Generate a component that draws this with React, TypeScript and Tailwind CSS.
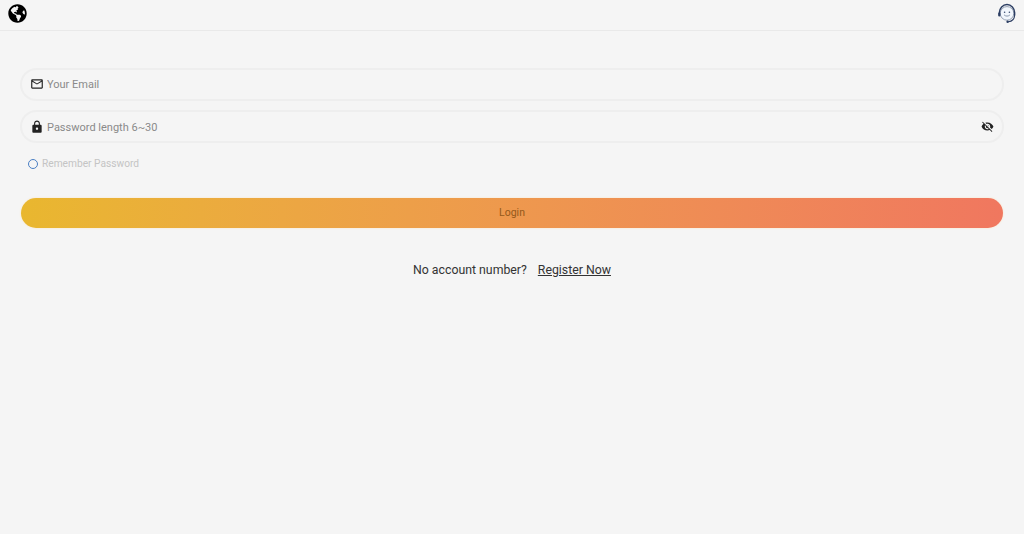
import { MdLock, MdMailOutline, MdVisibilityOff } from 'react-icons/md';
import { FaGlobeAmericas } from 'react-icons/fa';

// Support face with a headset, blue outline
const SupportIcon = () => (
  <svg width="20" height="21" viewBox="0 0 20 21" fill="none">
    <circle cx="10" cy="10.4" r="6.8" fill="#f2f7fd" stroke="#7d8ba3" strokeWidth=".8" />
    <path d="M2.4 12V9.6C2.4 5.2 5.8 1.6 10 1.6s7.6 3.6 7.6 8V12" stroke="#2c3e63" strokeWidth="1.5" strokeLinecap="round" />
    <path d="M17.6 12.4c-.2 3.6-2.6 6-6.2 6.3" stroke="#2c3e63" strokeWidth="1.1" strokeLinecap="round" />
    <circle cx="10.6" cy="18.8" r="1.2" fill="#2c3e63" />
    <rect x="1.2" y="9.4" width="2.2" height="4.2" rx="1" fill="#2c3e63" />
    <circle cx="7.6" cy="9.2" r=".8" fill="#3a4c70" />
    <circle cx="12.4" cy="9.2" r=".8" fill="#3a4c70" />
    <path d="M7.4 12.2c1.4 1.3 3.8 1.3 5.2 0" stroke="#7d8ba3" strokeWidth=".9" strokeLinecap="round" />
  </svg>
);

const App = () => {
  return (
    <div className="min-h-[534px] bg-[#f5f5f5] font-['Roboto',sans-serif]">
      <header className="flex h-[31px] items-center justify-between border-b border-[#e9e9e9] pl-[8px] pr-[7px] pb-[4px]">
        <FaGlobeAmericas className="h-[19px] w-[19px] text-black" />
        <SupportIcon />
      </header>

      <form className="flex flex-col px-[20px] pt-[37px]" onSubmit={(e) => e.preventDefault()}>
        <div className="flex h-[33px] items-center rounded-full border-2 border-[#eeeeee] pl-[8px] pr-[8px]">
          <MdMailOutline className="mb-[1px] h-[14px] w-[14px] text-[#222]" />
          <input
            placeholder="Your Email"
            className="ml-[3px] flex-1 bg-transparent pt-[2px] text-[11px] outline-none placeholder:text-[#8a8a8a]"
          />
        </div>

        <div className="mt-[9px] flex h-[33px] items-center rounded-full border-2 border-[#eeeeee] pl-[8px] pr-[8px]">
          <MdLock className="h-[14px] w-[14px] text-[#222]" />
          <input
            placeholder="Password length 6~30"
            className="ml-[3px] flex-1 bg-transparent pt-[3px] text-[11px] outline-none placeholder:text-[#8a8a8a]"
          />
          <MdVisibilityOff className="h-[13px] w-[13px] text-[#222]" />
        </div>

        <label className="mt-[14px] ml-[8px] flex h-[14px] items-center gap-[4px]">
          <span className="h-[10px] w-[10px] rounded-full border border-[#4a7fc4]" />
          <span className="text-[10.2px] text-[#c4c4c4]">Remember Password</span>
        </label>

        <button className="mt-[27px] ml-[1px] mr-[1px] h-[30px] rounded-full bg-gradient-to-r from-[#e9b72f] to-[#f0775f] text-[10.5px] text-[#94591a] shadow-[0_0_2px_#fde3bd]">
          Login
        </button>
      </form>

      <div className="mt-[33px] flex justify-center gap-[11px] text-[12.3px] text-[#333]">
        <span>No account number?</span>
        <a className="underline">Register Now</a>
      </div>
    </div>
  );
};

export default App;
